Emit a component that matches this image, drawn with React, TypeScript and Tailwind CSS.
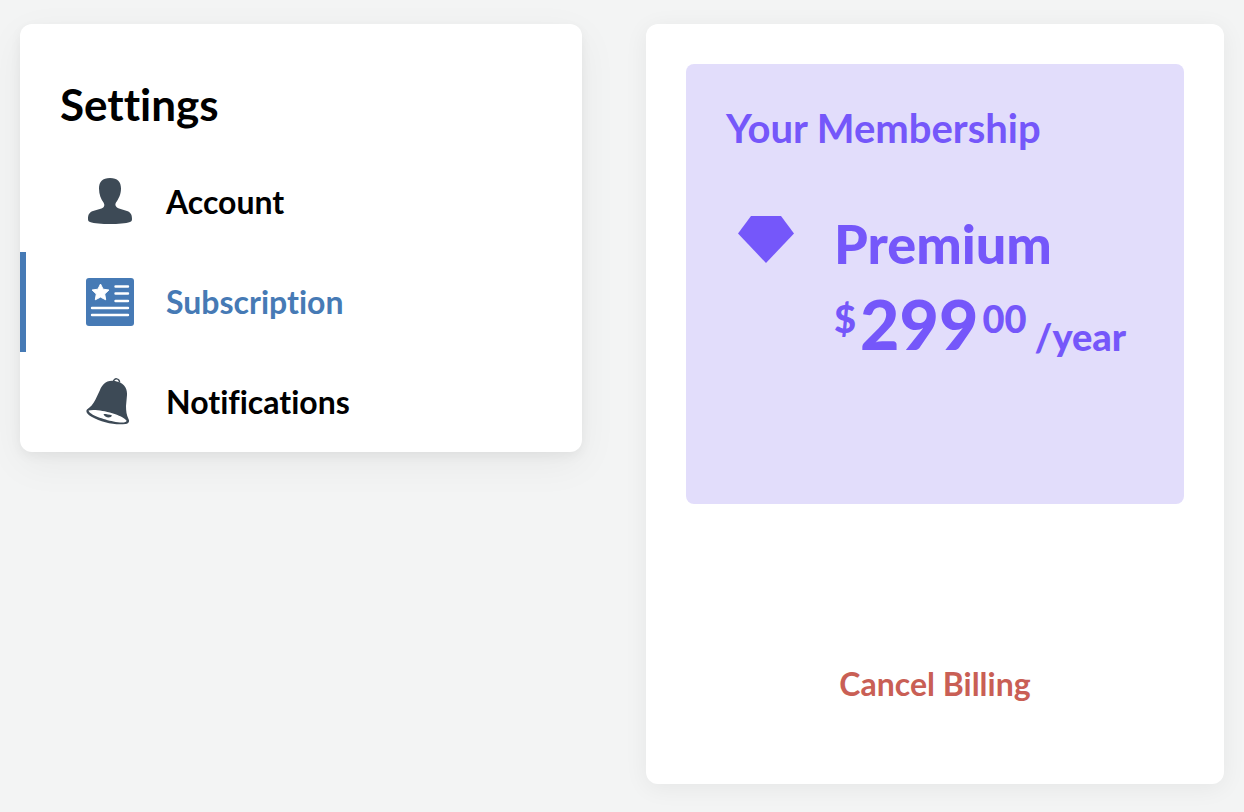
const NAV = [
  { label: "Account", href: "#account", icon: UserIcon, active: false },
  { label: "Subscription", href: "#subscription", icon: CardIcon, active: true },
  { label: "Notifications", href: "#notifications", icon: BellIcon, active: false },
];

function cx(...classes: Array<string | false | null | undefined>) {
  return classes.filter(Boolean).join(" ");
}

function UserIcon() {
  return (
    <svg width="48" height="48" viewBox="0 0 48 48" fill="currentColor" aria-hidden="true">
      <path d="M24 0C16.500 0 13 4 13 10.500c0 6 2 10.500 4.500 14 1.500 2.500 1 5-2 6L7 33c-4 1.500-5 4-5 8 0 1.500.5 2.500 2 3 8 2.700 32 2.700 40 0 1.500-.5 2-1.500 2-3 0-4-1-6.500-5-8l-8-2.500c-3-1-4.500-3.500-3-6 2.500-3.500 5-8 5-14C35 4 31.500 0 24 0Z" />
    </svg>
  );
}

function CardIcon() {
  return (
    <svg width="48" height="48" viewBox="0 0 48 48" aria-hidden="true">
      <rect width="48" height="48" rx="3" fill="currentColor" />
      <path d="m14.500 6 2.600 5.200 5.800.8-4.200 4 1 5.800-5.200-2.700L9.300 21.800l1-5.800-4.200-4 5.800-.8Z" fill="white" stroke="white" strokeLinejoin="round" />
      <path d="M29.500 8.500h12.500M29.500 15.500h12.500M29.500 23h12.500M6 30h36M6 37h36" stroke="white" strokeWidth="2.400" strokeLinecap="round" />
    </svg>
  );
}

function BellIcon() {
  return (
    <svg width="48" height="48" viewBox="0 0 48 48" aria-hidden="true">
      <path d="M27.500 4c0-4.500 6.500-4 6 .5" fill="none" stroke="currentColor" strokeWidth="1.500" />
      <path d="M29 3C20 1.500 16 7 14 12L9.500 21.500C7 26.500 4.500 29 1 31.500c-2 2.500 1 5 5 7.500 9 5 23 8.500 33.500 7 3-.5 4.500-2.500 3-5-2-4-2.500-8-2.500-13l1-11c.5-8-4-12.500-12-14Z" fill="currentColor" />
      <path d="M2.500 32.500c8-2.500 33 3.500 38 10 .5 2.500-6 2.500-13 1C18 41.500 3.500 37 2.500 32.500Z" fill="white" />
      <path d="M17.500 36c3 0 6 .5 8.500 1.500-1 3-7.500 2.500-8.500-1.500Z" fill="currentColor" />
    </svg>
  );
}

function DiamondIcon() {
  return (
    <svg width="56" height="48" viewBox="0 0 56 48" fill="currentColor" aria-hidden="true">
      <path d="M13 0h30l13 17.500L28 47 0 17.500Z" />
    </svg>
  );
}

export default function App() {
  return (
    <main className="flex min-h-screen items-start gap-16 bg-[#f3f4f4] px-5 py-6 font-['Lato',sans-serif] text-black [font-variant-ligatures:none]">
      <nav
        aria-label="Settings"
        className="min-w-0 flex-1 rounded-xl bg-white pt-13 shadow-[0_4px_12px_rgba(0,0,0,0.05),0_12px_40px_rgba(0,0,0,0.05)]"
      >
        <h1 className="px-10 text-[44px] leading-14 font-bold">Settings</h1>
        <ul className="mt-5">
          {NAV.map(({ label, href, icon: Icon, active }) => (
            <li key={label}>
              <a
                href={href}
                aria-current={active ? "page" : undefined}
                className={cx(
                  "flex h-25 items-center gap-8 border-l-6 pl-15 text-[32px] font-bold",
                  active ? "border-[#467ab5] text-[#467ab5]" : "border-transparent"
                )}
              >
                <span className={active ? "text-[#467ab5]" : "text-[#3d4a56]"}>
                  <Icon />
                </span>
                {label}
              </a>
            </li>
          ))}
        </ul>
      </nav>

      <section className="w-1/2 max-w-[578px] rounded-xl bg-white px-10 pt-10 pb-19 shadow-[0_4px_24px_rgba(0,0,0,0.06)]">
        <div className="h-110 rounded-lg bg-[#e2ddfb] p-10 text-[#7557fa]">
          <h2 className="text-[40px] leading-12 font-bold">Your Membership</h2>
          <div className="mt-16 flex gap-10 pl-3">
            <DiamondIcon />
            <div className="font-black">
              <p className="text-[54px] leading-14">Premium</p>
              <p className="mt-3 flex items-start">
                <span className="mt-2 text-[38px] leading-13">$</span>
                <span className="ml-1 text-[68px] leading-20">299</span>
                <span className="mt-2 ml-1 text-[38px] leading-13">00</span>
                <span className="mt-6 ml-2 text-[38px] leading-14">/year</span>
              </p>
            </div>
          </div>
        </div>
        <div className="flex justify-center pt-39">
          <button type="button" className="text-[32px] leading-12 font-bold text-[#c95f55]">
            Cancel Billing
          </button>
        </div>
      </section>
    </main>
  );
}
